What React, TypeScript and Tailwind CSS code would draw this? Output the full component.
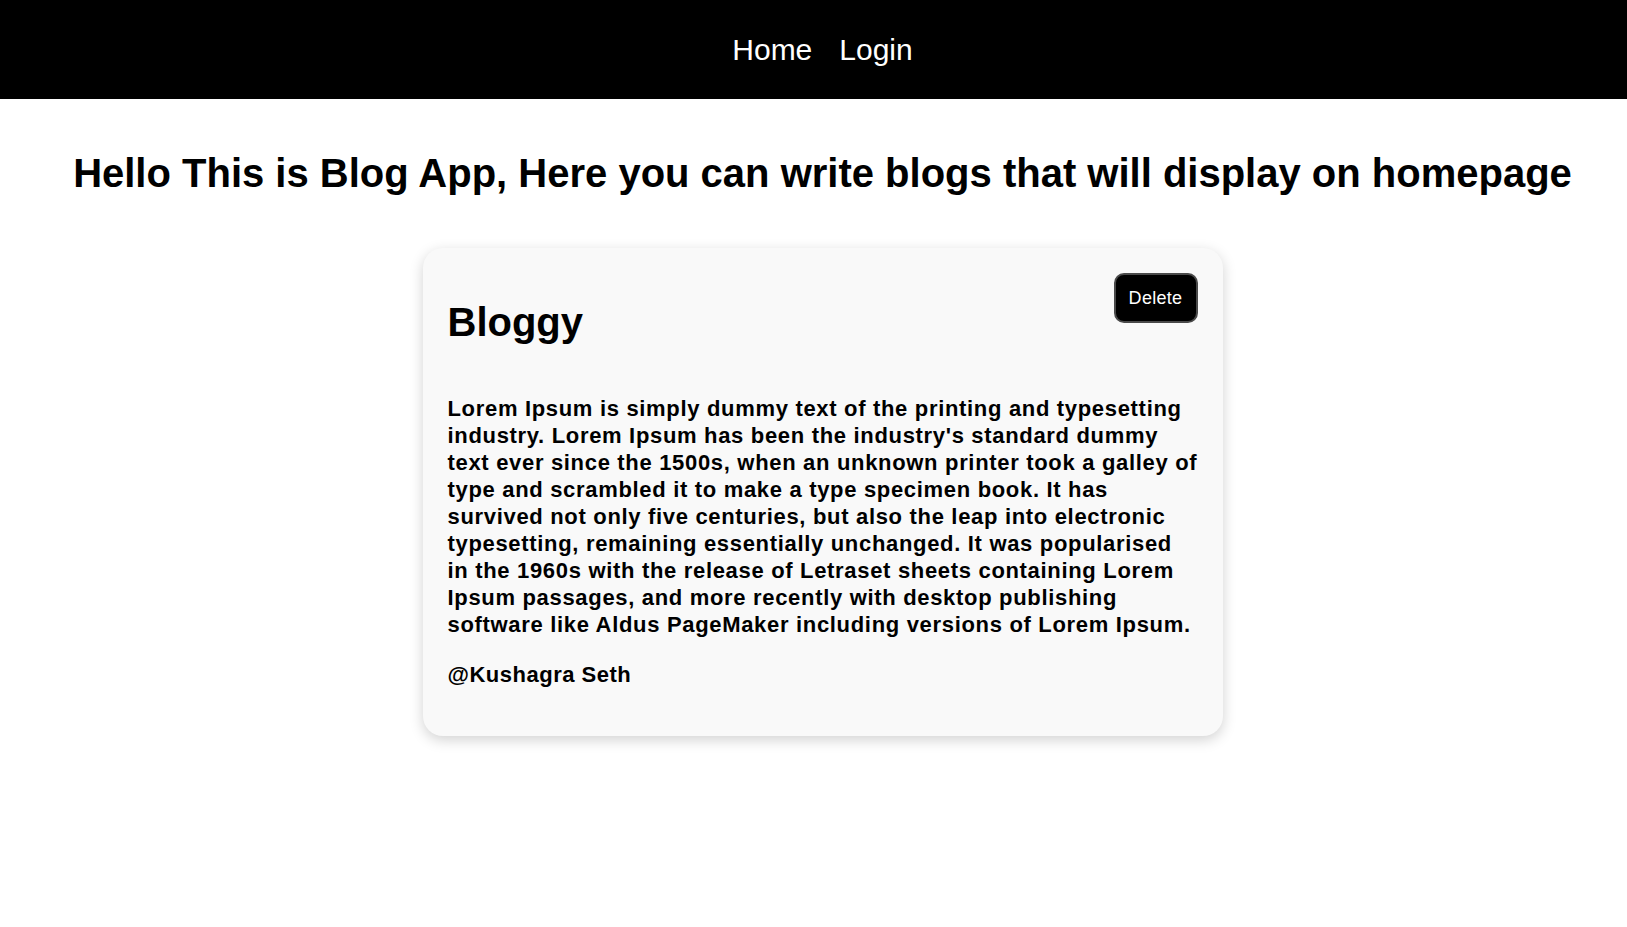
export default function App() {
  const blog = {
    title: "Bloggy",
    body: "Lorem Ipsum is simply dummy text of the printing and typesetting industry. Lorem Ipsum has been the industry's standard dummy text ever since the 1500s, when an unknown printer took a galley of type and scrambled it to make a type specimen book. It has survived not only five centuries, but also the leap into electronic typesetting, remaining essentially unchanged. It was popularised in the 1960s with the release of Letraset sheets containing Lorem Ipsum passages, and more recently with desktop publishing software like Aldus PageMaker including versions of Lorem Ipsum.",
    author: "@Kushagra Seth",
  };

  return (
    <div className="w-full min-h-screen bg-white font-['Liberation_Sans',Arial,sans-serif] text-black">
      <nav className="w-full h-[99px] bg-black flex items-center justify-center gap-[27px] pl-[18px]">
        <a className="text-white text-[30px] cursor-pointer">Home</a>
        <a className="text-white text-[30px] cursor-pointer">Login</a>
      </nav>
      <div className="w-full flex flex-col items-center pl-[18px]">
        <h1 className="mt-[51px] text-[40px] leading-[46px] font-bold text-center">
          Hello This is Blog App, Here you can write blogs that will display on homepage
        </h1>
        <div className="mt-[52px] w-[800px] bg-[#f9f9f9] rounded-[20px] shadow-[0_4px_14px_rgba(0,0,0,0.18)] p-[25px] pb-[48px]">
          <div className="flex items-start justify-between">
            <h2 className="mt-[26px] text-[40px] leading-[46px] font-bold">{blog.title}</h2>
            <button className="w-[84px] h-[50px] bg-black text-white text-[18px] tracking-[0.3px] rounded-[10px] border-2 border-[#4a4a4a] cursor-pointer">
              Delete
            </button>
          </div>
          <p className="mt-[50px] text-[22px] font-bold leading-[27px] tracking-[0.68px]">{blog.body}</p>
          <p className="mt-[23px] text-[22px] font-bold leading-[27px] tracking-[0.5px]">{blog.author}</p>
        </div>
      </div>
    </div>
  );
}
